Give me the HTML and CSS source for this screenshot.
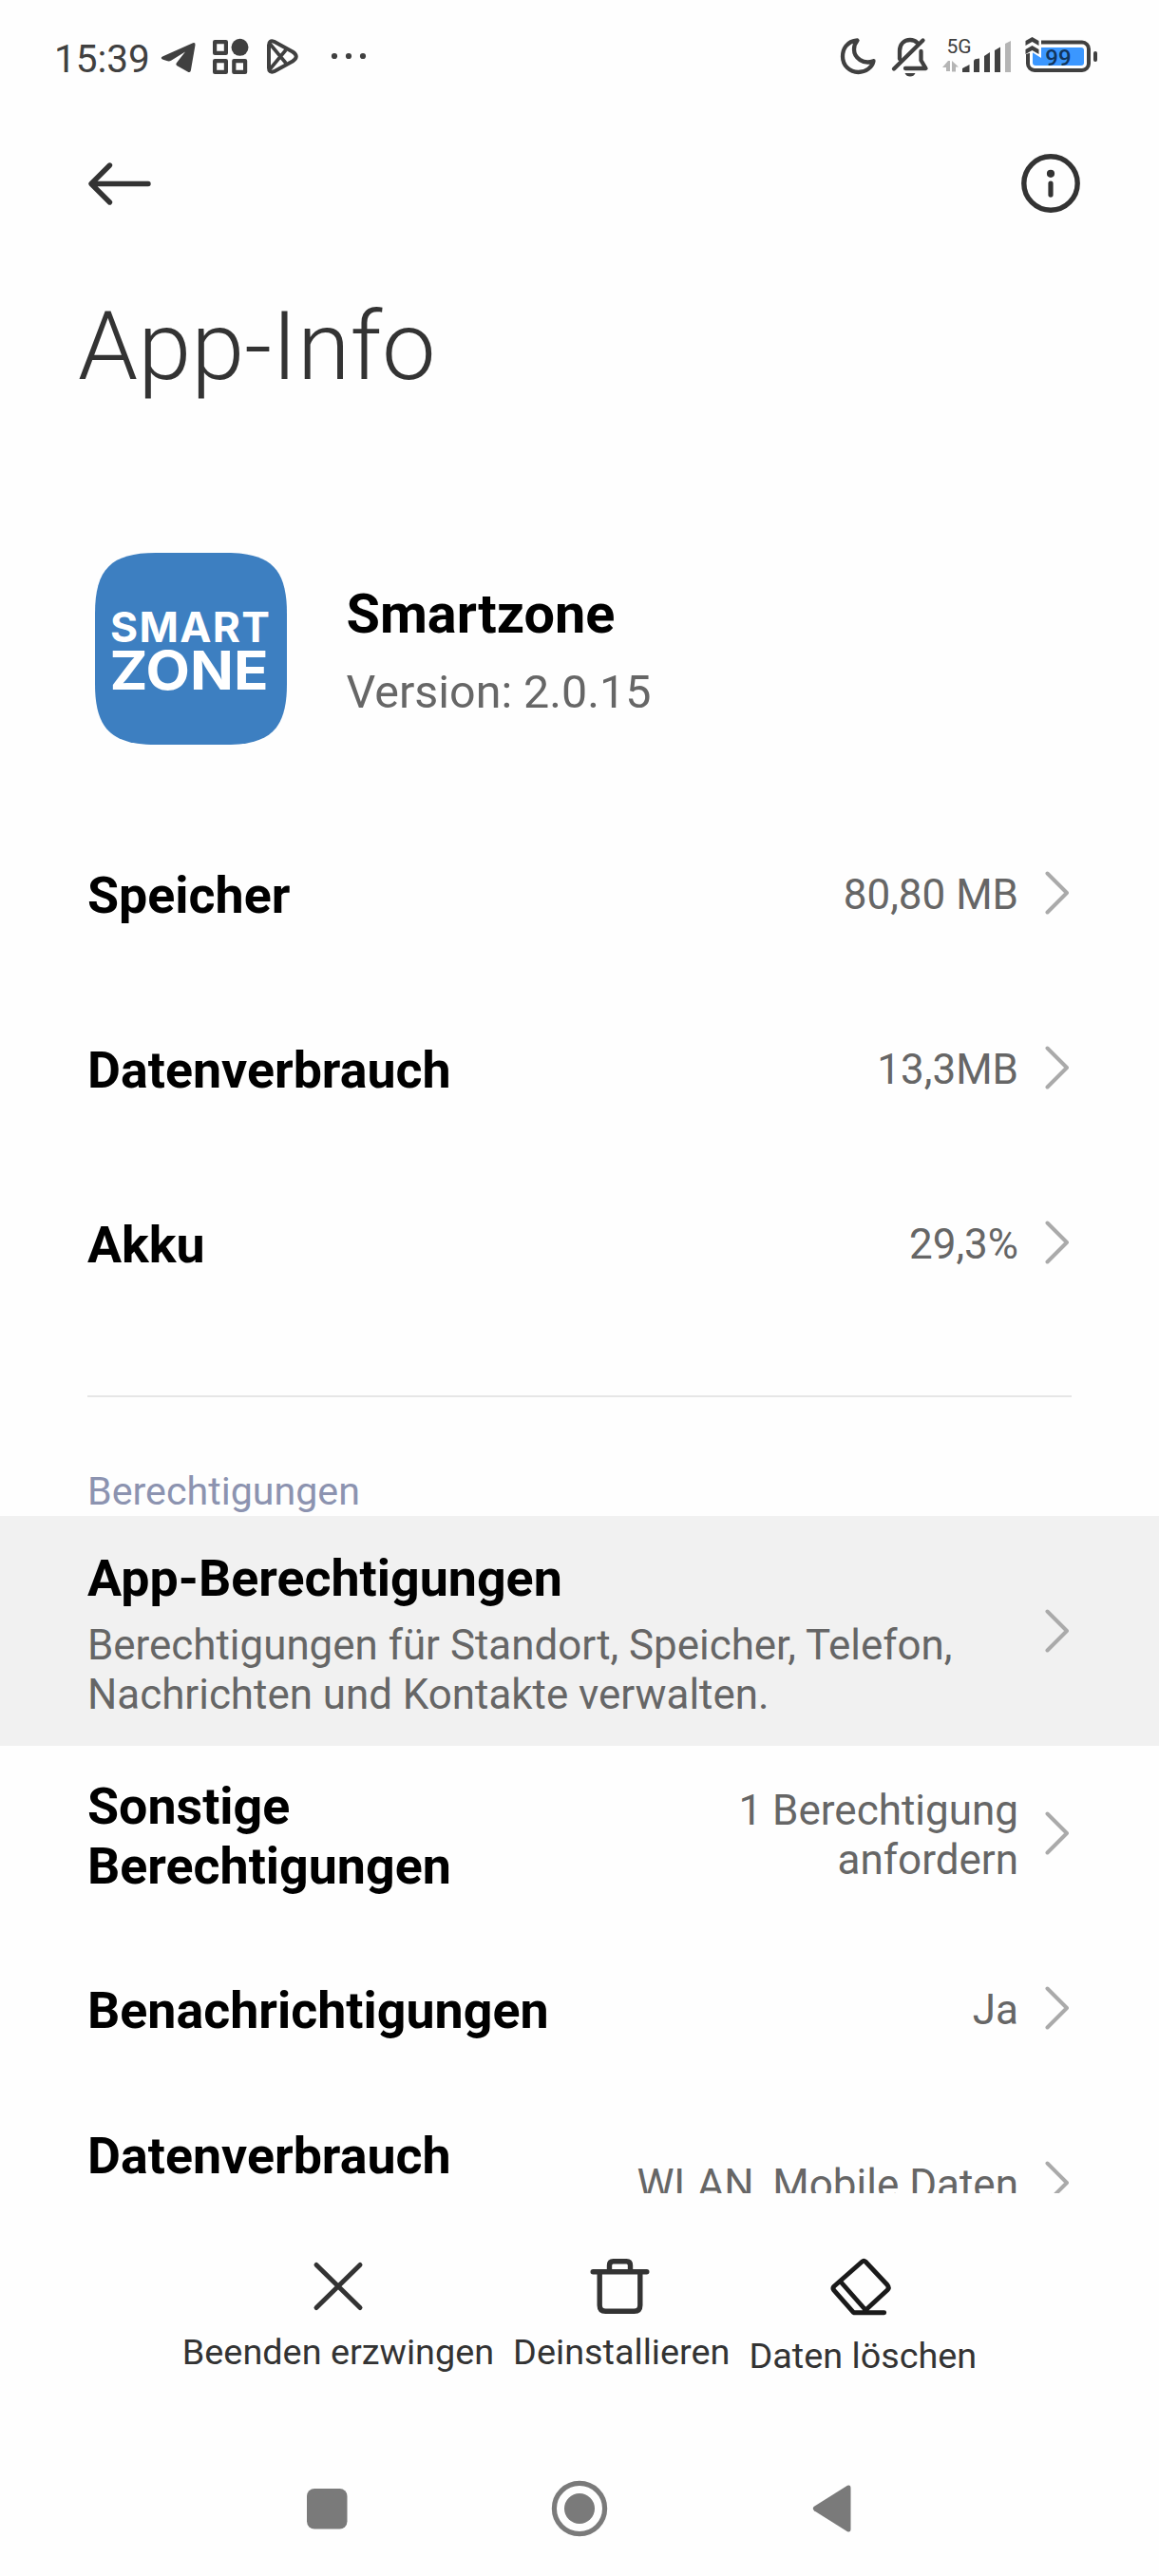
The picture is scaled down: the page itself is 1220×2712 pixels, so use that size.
FILE: index.html
```html
<!DOCTYPE html>
<html lang="de">
<head>
<meta charset="utf-8">
<title>App-Info</title>
<link rel="stylesheet" href="styles.css">
</head>
<body>
<div class="screen">
  <header class="status">
    <span class="clock">15:39</span>
    <svg class="status-icons-left" width="240" height="60" viewBox="160 30 240 60">
      <g fill="#404040">
        <path d="M171 59.500 L203 45.200 Q206 44.500 205.500 47.500 L200.800 74.500 Q200 77 197.500 75.600 L186 69 Q184.500 67.500 186 66 L195 54.500 L180.500 63.500 Q178 65 175.500 64 L171 62.400 Q168.500 61 171 59.500Z"/>
        <circle cx="252.500" cy="49.800" r="9"/>
      </g>
      <g fill="none" stroke="#404040" stroke-width="4.200" stroke-linejoin="round">
        <rect x="226.100" y="44.100" width="11.800" height="11.800"/>
        <rect x="226.100" y="64.100" width="11.800" height="11.800"/>
        <rect x="246.300" y="64.100" width="11.800" height="11.800"/>
        <path d="M283 47.500 Q283 42 288.500 43.800 L308 54.500 Q315.500 59.500 308 64.500 L288.500 75.200 Q283 77 283 71.500Z" stroke-width="4"/>
        <path d="M284 46 L301 66.500 M284 73 L301 52.500" stroke-width="3.600"/>
      </g>
      <g fill="#404040"><circle cx="352" cy="59" r="3.100"/><circle cx="367" cy="59" r="3.100"/><circle cx="382" cy="59" r="3.100"/></g>
    </svg>
    <svg class="status-icons-right" width="290" height="60" viewBox="870 30 290 60">
      <g fill="none" stroke="#404040" stroke-width="4.300" stroke-linejoin="round" stroke-linecap="round">
        <path d="M902.500 42.500 C891 43.500 887 52 887 59.500 C887 69 894.500 76 903.500 76 C911.500 76 918 71 919.500 64.200 C909 68.500 899 61 899 52 C899 48 900.300 45 902.500 42.500Z"/>
        <path d="M941 72.500 L971.500 42.500"/>
        <path d="M947 62 V53.500 C947 46.500 951.500 42 958 42 C961 42 963.500 43 965.500 45" />
        <path d="M969.500 54 V63.500 L974.500 72 H953"/>
      </g>
      <path fill="#404040" d="M952.500 77 H963.500 Q962 80.500 958 80.500 Q954 80.500 952.500 77Z"/>
      <text x="996.500" y="56.300" class="net">5G</text>
      <path fill="#b5b5b5" d="M992 71 L998 64 V75 H996 V71Z M1002 64 L1009 70.500 H1006 V75.500 H1002Z M998 64 V75 H1000 V64Z"/>
      <g fill="#404040">
        <path d="M1013 76 V72 L1020.500 68 V76Z M1025 76 V65 Q1025 62 1028 62 L1031 61.500 V76Z M1036 76 V59 L1042 55 V76Z M1047 76 V53 L1053 49.500 V76Z"/>
      </g>
      <path fill="#b5b5b5" d="M1058 76 V46 L1064 43 V76Z"/>
      <rect x="1082" y="44.500" width="64" height="29.500" rx="7" fill="none" stroke="#404040" stroke-width="4"/>
      <rect x="1087" y="50" width="54" height="19" rx="3" fill="#3b97ff"/>
      <path fill="#fefefe" d="M1077 36 H1096 V61 L1086.500 55 L1077 58Z"/>
      <path fill="#404040" d="M1086.500 39 L1093.500 43 V48 L1086.500 44 L1079.500 48 V43Z M1086.500 48 L1093.500 52 V57 L1086.500 53 L1079.500 57 V52Z"/>
      <rect x="1151" y="54" width="4" height="11" rx="2" fill="#404040"/>
      <text x="1114" y="69" class="charge">99</text>
    </svg>
  </header>

  <nav class="toolbar">
    <svg width="68" height="48" viewBox="0 0 68 48" fill="none" stroke="#333" stroke-width="5.400" stroke-linecap="round" stroke-linejoin="round"><path d="M64 24.500 H4.500 M23.500 5 L4 24.500 L23.500 44"/></svg>
    <svg width="64" height="64" viewBox="0 0 64 64"><circle cx="32" cy="32" r="28.200" fill="none" stroke="#333" stroke-width="5.400"/><circle cx="32" cy="21.800" r="4.100" fill="#333"/><rect x="29.400" y="29.500" width="5.200" height="17.200" rx="2.600" fill="#333"/></svg>
  </nav>

  <h1 class="title">App-Info</h1>

  <section class="app">
    <svg class="app-icon" width="202" height="202" viewBox="0 0 202 202">
      <path fill="#3d7fc1" d="M0 64 C0 17 17 0 64 0 H138 C185 0 202 17 202 64 V138 C202 185 185 202 138 202 H64 C17 202 0 185 0 138Z"/>
      <text class="logo" x="16" y="93.500" font-size="44.500" textLength="168" lengthAdjust="spacing">SMART</text>
      <text class="logo" x="15.500" y="144" font-size="56.500" textLength="167" lengthAdjust="spacingAndGlyphs">ZONE</text>
    </svg>
    <div class="app-text">
      <h2 class="app-name">Smartzone</h2>
      <p class="app-version">Version: 2.0.15</p>
    </div>
  </section>

  <main class="list">
    <div class="row"><span class="label">Speicher</span><span class="value">80,80 MB</span><svg class="chev" viewBox="0 0 26 46"><path d="M2.500 2.500 L23 23 L2.500 43.500"/></svg></div>
    <div class="row"><span class="label">Datenverbrauch</span><span class="value">13,3MB</span><svg class="chev" viewBox="0 0 26 46"><path d="M2.500 2.500 L23 23 L2.500 43.500"/></svg></div>
    <div class="row"><span class="label">Akku</span><span class="value">29,3%</span><svg class="chev" viewBox="0 0 26 46"><path d="M2.500 2.500 L23 23 L2.500 43.500"/></svg></div>
    <hr class="divider">
    <h3 class="category">Berechtigungen</h3>
    <div class="row pressed"><div class="stack"><span class="label">App-Berechtigungen</span><p class="summary">Berechtigungen für Standort, Speicher, Telefon,<br>Nachrichten und Kontakte verwalten.</p></div><svg class="chev" viewBox="0 0 26 46"><path d="M2.500 2.500 L23 23 L2.500 43.500"/></svg></div>
    <div class="row"><span class="label">Sonstige<br>Berechtigungen</span><span class="value">1 Berechtigung<br>anfordern</span><svg class="chev" viewBox="0 0 26 46"><path d="M2.500 2.500 L23 23 L2.500 43.500"/></svg></div>
    <div class="row"><span class="label">Benachrichtigungen</span><span class="value">Ja</span><svg class="chev" viewBox="0 0 26 46"><path d="M2.500 2.500 L23 23 L2.500 43.500"/></svg></div>
    <div class="row"><span class="label two-line">Datenverbrauch</span><span class="value">WLAN, Mobile Daten</span><svg class="chev" viewBox="0 0 26 46"><path d="M2.500 2.500 L23 23 L2.500 43.500"/></svg></div>
  </main>

  <footer class="actions">
    <div class="action">
      <svg width="66" height="66" viewBox="0 0 66 66" fill="none" stroke="#333" stroke-width="5" stroke-linecap="round"><path d="M10 10.500 L56 55.500 M56 10.500 L10 55.500"/></svg>
      <span>Beenden erzwingen</span>
    </div>
    <div class="action">
      <svg width="66" height="66" viewBox="0 0 66 66" fill="none" stroke="#333" stroke-width="5.400" stroke-linecap="round" stroke-linejoin="round"><path d="M3.200 17.700 H59.800 M20.500 17 V11 Q20.500 6.700 24.500 6.700 H38.500 Q42.500 6.700 42.500 11 V17 M10.200 18.500 V53 Q10.200 59.300 16.500 59.300 H46.500 Q52.800 59.300 52.800 53 V18.500"/></svg>
      <span>Deinstallieren</span>
    </div>
    <div class="action last">
      <svg class="eraser" width="66" height="66" viewBox="0 0 66 66" fill="none" stroke="#1a1a1a" stroke-width="4.900" stroke-linecap="round" stroke-linejoin="round"><path d="M32.500 7 Q34.300 5.400 36 7 L59 31.500 Q61.500 34.500 59 37 L35.700 58.500 M32.500 7 L3 33 Q1 35 2.800 37.200 L23.500 60.700 H55.700 M9.700 28 L35.700 57.500"/></svg>
      <span>Daten löschen</span>
    </div>
  </footer>

  <nav class="navbar">
    <svg width="60" height="60" viewBox="0 0 60 60" fill="#7a7a7a"><rect x="9" y="9" width="42.500" height="42.500" rx="8"/></svg>
    <svg width="60" height="60" viewBox="0 0 60 60"><circle cx="30" cy="30" r="26.600" fill="none" stroke="#7a7a7a" stroke-width="5.200"/><circle cx="30" cy="30" r="16" fill="#7a7a7a"/></svg>
    <svg width="60" height="60" viewBox="0 0 60 60" fill="#7a7a7a"><path d="M11 27.800 L46 5.800 Q49.500 4.500 49.500 8.500 V51.500 Q49.500 55.500 46 54.200 L11 32.200 Q8.500 30 11 27.800Z"/></svg>
  </nav>
</div>
</body>
</html>
```
FILE: styles.css
```css
* { box-sizing: border-box; }
body { margin: 0; background: #fefefe; font-family: Roboto, "Liberation Sans", sans-serif; }
h1, h2, h3, p { margin: 0; font-weight: 400; }
svg { display: block; flex: none; }
.screen { width: 1220px; height: 2712px; display: flex; flex-direction: column; overflow: hidden; }

.status { height: 120px; flex: none; display: flex; padding: 30px 60px 0 57px; }
.clock { width: 103px; font-size: 40.5px; line-height: 60px; font-weight: 450; color: #404040; padding-top: 2px; }
.status-icons-right { margin-left: auto; }
.net { font-size: 21px; fill: #404040; }
.charge { font-size: 24px; font-weight: 500; text-anchor: middle; fill: #12355c; }

.toolbar { height: 145px; flex: none; display: flex; justify-content: space-between; align-items: center; padding: 0 82px 0 92px; }

.title { height: 317px; flex: none; padding: 41px 0 0 82px; font-size: 101px; line-height: 118px; font-weight: 300; color: #333; }

.app { height: 202px; flex: none; display: flex; margin-left: 99.500px; gap: 63px; }
.app-icon { overflow: visible; }
.logo { font-family: Inter, sans-serif; font-weight: 700; fill: #fff; }
.app-text { padding-top: 31px; }
.app-name { font-size: 57.6px; line-height: 67px; font-weight: 700; color: #000; }
.app-version { font-size: 48.4px; line-height: 56px; margin-top: 21px; color: #666; }

.list { height: 1525px; flex: none; padding-top: 64px; overflow: hidden; }
.row { height: 184px; display: flex; align-items: center; padding: 0 94px 0 92px; }
.label { flex: 1; padding-top: 5px; font-size: 53.75px; line-height: 63px; font-weight: 700; color: #000; }
.two-line { margin-bottom: 63px; }
.value { padding-top: 4px; font-size: 44px; line-height: 52px; text-align: right; color: #666; margin-right: 28px; }
.chev { width: 26px; height: 46px; fill: none; stroke: #aaa; stroke-width: 4; stroke-linecap: round; stroke-linejoin: round; }
.divider { margin: 69px 92px 0; height: 2px; border: 0; background: #e6e6e6; }
.category { height: 125px; padding: 73px 0 0 92px; font-size: 41.2px; line-height: 52px; color: #8c93b0; }
.pressed { height: 242px; background: #f1f1f1; }
.stack { flex: 1; padding-top: 6px; }
.stack .label { display: block; padding-top: 0; }
.summary { font-size: 43.9px; line-height: 52px; color: #666; margin-top: 13px; }

.actions { height: 271px; flex: none; display: flex; justify-content: center; gap: 20px; padding-top: 65px; }
.action { display: flex; flex-direction: column; align-items: center; gap: 14px; font-size: 37.8px; line-height: 44px; color: #333; }
.last { gap: 18px; }
.eraser { overflow: visible; }

.navbar { display: flex; justify-content: center; gap: 206px; padding-top: 31px; }
```
